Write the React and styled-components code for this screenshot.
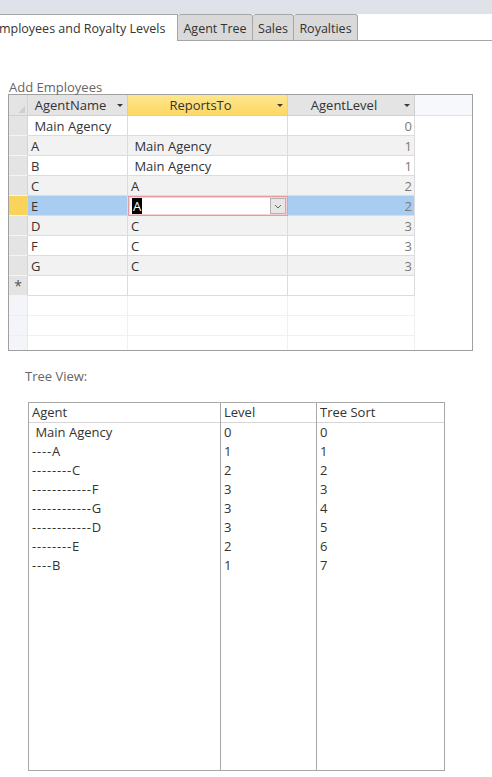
import React from 'react';
import styled, { createGlobalStyle, css } from 'styled-components';

const Global = createGlobalStyle`
  html, body { margin: 0; padding: 0; background: #ffffff; }
  body {
    font-family: "Open Sans", "Noto Sans", sans-serif;
    font-size: 13px;
    color: #333333;
  }
`;

const Page = styled.div`
  width: 492px;
  height: 777px;
  overflow: hidden;
  background: #ffffff;
`;

const TopBand = styled.div`
  height: 14px;
  background: #dfe3e9;
`;

const TabBar = styled.div`
  display: flex;
  height: 27px;
  align-items: stretch;
  font-size: 12.5px;
`;

const ActiveTab = styled.div`
  box-sizing: border-box;
  width: 188px;
  margin-left: -10px;
  padding-left: 2px;
  padding-top: 1px;
  display: flex;
  align-items: center;
  background: #ffffff;
  border-top: 1px solid #a6a6a6;
  border-right: 1px solid #a6a6a6;
  white-space: nowrap;
  color: #333;
`;

const Tab = styled.div`
  box-sizing: border-box;
  width: ${p => p.$w}px;
  display: flex;
  align-items: center;
  justify-content: center;
  padding-top: 1px;
  background: #d9d9d9;
  border: 1px solid #a6a6a6;
  border-left: none;
  border-radius: 3px 3px 0 0;
  white-space: nowrap;
  color: #333;
`;

const TabFill = styled.div`
  flex: 1;
  border-bottom: 1px solid #a6a6a6;
`;

const Content = styled.div`
  padding-left: 8px;
`;

const SectionLabel = styled.div`
  height: 14px;
  line-height: 14px;
  margin-top: ${p => p.$mt}px;
  padding-left: ${p => p.$pl || 1}px;
  color: #666666;
`;

const Sheet = styled.div`
  box-sizing: border-box;
  width: 465px;
  height: 257px;
  border: 1px solid #a0a0a0;
  background: #ffffff;
  display: flex;
  flex-direction: column;
  overflow: hidden;
`;

const SheetRow = styled.div`
  display: grid;
  grid-template-columns: 19px 100px 160px 127px 1fr;
  height: ${p => p.$h || 20}px;
  flex-shrink: 0;
`;

const rowBg = {
  white: '#ffffff',
  gray: '#f2f2f2',
  sel: '#a9cdf0',
};

const Cell = styled.div`
  box-sizing: border-box;
  display: flex;
  align-items: center;
  padding: 0 ${p => (p.$num ? '2px' : '0')} 0 ${p => (p.$num ? '0' : '3px')};
  justify-content: ${p => (p.$num ? 'flex-end' : 'flex-start')};
  background: ${p => rowBg[p.$bg] || '#ffffff'};
  border-right: 1px solid ${p => (p.$empty ? '#f0f0f0' : '#dcdcdc')};
  border-bottom: 1px solid ${p => (p.$empty ? '#f0f0f0' : '#dcdcdc')};
  color: ${p => (p.$num ? '#7a7a7a' : '#333333')};
  white-space: pre;
  overflow: hidden;
`;

const Blank = styled.div`
  background: #ffffff;
`;

const Selector = styled.div`
  box-sizing: border-box;
  display: flex;
  align-items: center;
  justify-content: center;
  background: ${p => (p.$active ? '#fad35b' : p.$empty ? '#f3f5f9' : '#e4e4e4')};
  border-right: 1px solid ${p => (p.$empty ? '#e6e9ef' : '#d4d4d4')};
  border-bottom: 1px solid ${p => (p.$empty ? '#eceef3' : '#f4f4f4')};
  color: #555;
  font-size: 14px;
`;

const CornerSelector = styled(Selector)`
  position: relative;
  border-bottom: 1px solid #d0d0d0;
  &::after {
    content: '';
    position: absolute;
    right: 2px;
    bottom: 2px;
    width: 0;
    height: 0;
    border-left: 7px solid transparent;
    border-bottom: 7px solid #cfcfcf;
  }
`;

const HeadCell = styled.div`
  box-sizing: border-box;
  display: flex;
  align-items: center;
  background: ${p => (p.$active ? 'linear-gradient(#fee690, #fdd862)' : '#e4e4e4')};
  border-right: 1px solid #cfcfcf;
  border-bottom: 1px solid #d0d0d0;
  color: #333;
`;

const HeadText = styled.span`
  flex: 1;
  text-align: center;
`;

const SortArrow = styled.span`
  width: 14px;
  display: flex;
  justify-content: center;
  &::before {
    content: '';
    width: 0;
    height: 0;
    border-left: 3px solid transparent;
    border-right: 3px solid transparent;
    border-top: 3px solid #3a3a3a;
  }
`;

const HeadBlank = styled.div`
  background: #f7f8fb;
  border-bottom: 1px solid #e2e2e2;
`;

const EditCell = styled.div`
  box-sizing: border-box;
  display: flex;
  align-items: center;
  justify-content: space-between;
  background: #ffffff;
  border: 1px solid #e79aa2;
  box-shadow: inset 0 0 0 1px #f7d0d3;
  padding: 0 1px 0 3px;
`;

const Highlight = styled.span`
  background: #000000;
  color: #ffffff;
  padding: 0 1px;
  line-height: 16px;
`;

const DropButton = styled.span`
  box-sizing: border-box;
  width: 16px;
  height: 16px;
  display: flex;
  align-items: center;
  justify-content: center;
  background: #e6e6e6;
  border: 1px solid #b4b4b4;
`;

const TreeTable = styled.div`
  box-sizing: border-box;
  width: 417px;
  height: 369px;
  margin-top: 19px;
  margin-left: 20px;
  border: 1px solid #a8a8a8;
  display: flex;
  flex-direction: column;
`;

const TreeRow = styled.div`
  display: grid;
  grid-template-columns: 192px 96px 1fr;
  height: 19px;
  flex-shrink: 0;
  ${p => p.$head && css`
    height: 20px;
    border-bottom: 1px solid #d6d6d6;
    box-sizing: border-box;
  `}
  ${p => p.$fill && css`
    flex: 1;
    height: auto;
  `}
`;

const TreeCell = styled.div`
  box-sizing: border-box;
  display: flex;
  align-items: center;
  padding-left: 3px;
  padding-bottom: 2px;
  white-space: pre;
  color: #333;
  &:not(:last-child) {
    border-right: 1px solid #a8a8a8;
  }
`;

const Dashes = styled.span`
  letter-spacing: 0.8px;
`;

const Chevron = () => (
  <svg width="8" height="5" viewBox="0 0 8 5">
    <path d="M1 1 L4 4 L7 1" fill="none" stroke="#666" strokeWidth="1" />
  </svg>
);

const agents = [
  { name: ' Main Agency', to: '', lvl: 0 },
  { name: 'A', to: ' Main Agency', lvl: 1 },
  { name: 'B', to: ' Main Agency', lvl: 1 },
  { name: 'C', to: 'A', lvl: 2 },
  { name: 'E', to: 'A', lvl: 2, selected: true },
  { name: 'D', to: 'C', lvl: 3 },
  { name: 'F', to: 'C', lvl: 3 },
  { name: 'G', to: 'C', lvl: 3 },
];

const tree = [
  { name: ' Main Agency', depth: 0, level: '0', sort: '0' },
  { name: 'A', depth: 1, level: '1', sort: '1' },
  { name: 'C', depth: 2, level: '2', sort: '2' },
  { name: 'F', depth: 3, level: '3', sort: '3' },
  { name: 'G', depth: 3, level: '3', sort: '4' },
  { name: 'D', depth: 3, level: '3', sort: '5' },
  { name: 'E', depth: 2, level: '2', sort: '6' },
  { name: 'B', depth: 1, level: '1', sort: '7' },
];

export default function App() {
  return (
    <Page>
      <Global />
      <TopBand />
      <TabBar>
        <ActiveTab>Employees and Royalty Levels</ActiveTab>
        <Tab $w={75}>Agent Tree</Tab>
        <Tab $w={41}>Sales</Tab>
        <Tab $w={64}>Royalties</Tab>
        <TabFill />
      </TabBar>
      <Content>
        <SectionLabel $mt={39}>Add Employees</SectionLabel>
        <Sheet>
          <SheetRow $h={21}>
            <CornerSelector />
            <HeadCell><HeadText>AgentName</HeadText><SortArrow /></HeadCell>
            <HeadCell $active><HeadText>ReportsTo</HeadText><SortArrow /></HeadCell>
            <HeadCell><HeadText>AgentLevel</HeadText><SortArrow /></HeadCell>
            <HeadBlank />
          </SheetRow>
          {agents.map((a, i) => {
            const bg = a.selected ? 'sel' : i % 2 === 1 ? 'gray' : 'white';
            return (
              <SheetRow key={a.name}>
                <Selector $active={a.selected} />
                <Cell $bg={bg}>{a.name}</Cell>
                {a.selected ? (
                  <EditCell>
                    <Highlight>A</Highlight>
                    <DropButton><Chevron /></DropButton>
                  </EditCell>
                ) : (
                  <Cell $bg={bg}>{a.to}</Cell>
                )}
                <Cell $bg={bg} $num>{a.lvl}</Cell>
                <Blank />
              </SheetRow>
            );
          })}
          <SheetRow>
            <Selector>*</Selector>
            <Cell />
            <Cell />
            <Cell />
            <Blank />
          </SheetRow>
          {[0, 1, 2].map(k => (
            <SheetRow key={k}>
              <Selector $empty />
              <Cell $empty />
              <Cell $empty />
              <Cell $empty />
              <Blank />
            </SheetRow>
          ))}
        </Sheet>
        <SectionLabel $mt={18} $pl={17}>Tree View:</SectionLabel>
        <TreeTable>
          <TreeRow $head>
            <TreeCell>Agent</TreeCell>
            <TreeCell>Level</TreeCell>
            <TreeCell>Tree Sort</TreeCell>
          </TreeRow>
          {tree.map(r => (
            <TreeRow key={r.sort}>
              <TreeCell>
                {r.depth > 0 && <Dashes>{'-'.repeat(r.depth * 4)}</Dashes>}
                {r.name}
              </TreeCell>
              <TreeCell>{r.level}</TreeCell>
              <TreeCell>{r.sort}</TreeCell>
            </TreeRow>
          ))}
          <TreeRow $fill>
            <TreeCell />
            <TreeCell />
            <TreeCell />
          </TreeRow>
        </TreeTable>
      </Content>
    </Page>
  );
}
